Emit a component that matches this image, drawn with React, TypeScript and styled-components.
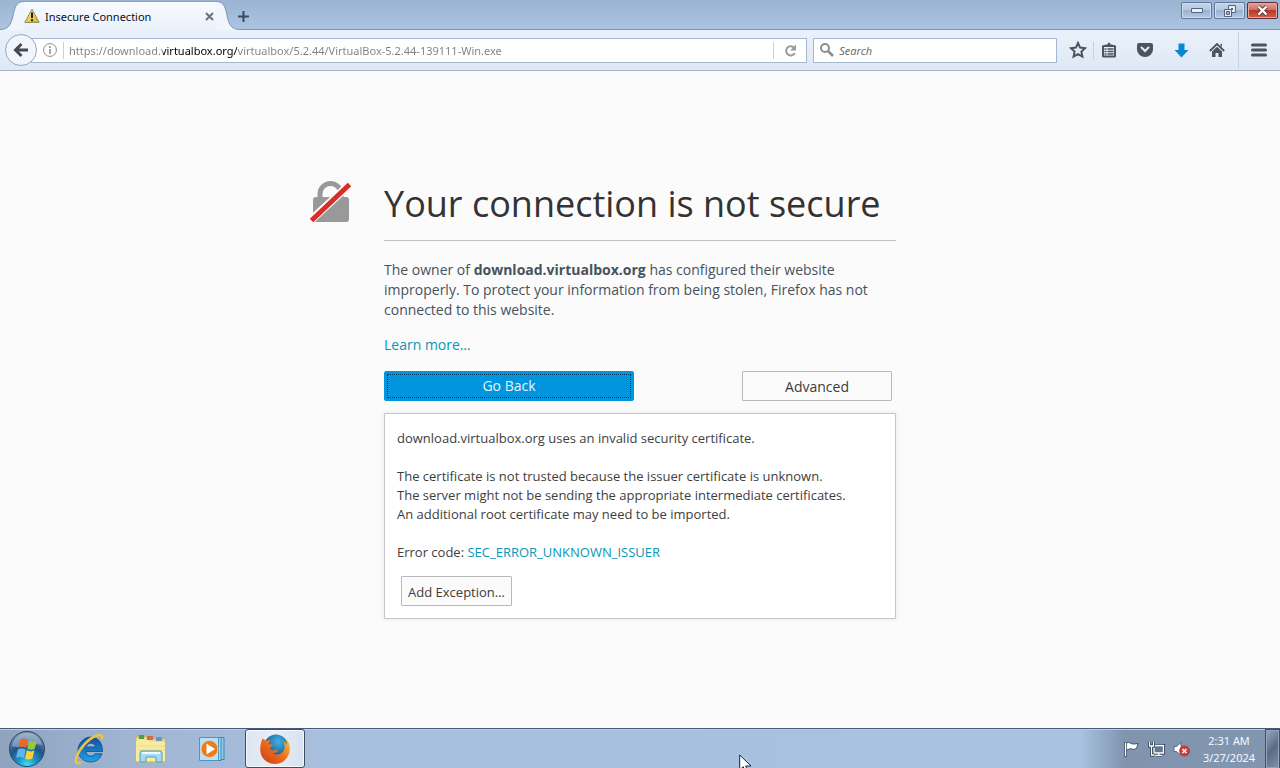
import React from "react";
import styled, { createGlobalStyle, css } from "styled-components";

const GlobalStyle = createGlobalStyle`
  *, *::before, *::after { box-sizing: border-box; }
  body {
    margin: 0;
    background: #fbfbfb;
    color: #47525c;
    font-family: "Open Sans", "Noto Sans", sans-serif;
    font-size: 14px;
  }
  button, input { font: inherit; }
  svg { display: block; flex: none; }
`;

const Desktop = styled.div`
  display: flex;
  flex-direction: column;
  min-height: 100vh;
  overflow: hidden;
`;

/* ---------- tab strip ---------- */

const TabStrip = styled.header`
  display: flex;
  align-items: flex-end;
  height: 30px;
  background: linear-gradient(#9bb4d1, #a5bedc 60%, #abc5e3);
  box-shadow: inset 0 -1px #8296b4;
  font-family: "Noto Sans", sans-serif;
`;

const TabFrame = styled.div`
  display: flex;
  width: 240px;
  height: 30px;
`;

const TabBody = styled.div`
  display: flex;
  align-items: center;
  flex: 1;
  min-width: 0;
  margin-top: 1px;
  border-top: 1px solid #8ba0bd;
  background: linear-gradient(#f8fbfe, #eaf1fa);
`;

const TabTitle = styled.span`
  flex: 1;
  margin-left: 5px;
  color: #0b0f1c;
  font-size: 11px;
  white-space: nowrap;
`;

const GlyphButton = styled.button<{ $width: number; $height: number }>`
  display: flex;
  align-items: center;
  justify-content: center;
  flex: none;
  width: ${(p) => p.$width}px;
  height: ${(p) => p.$height}px;
  padding: 0;
  border: 0;
  background: none;
`;

const Caption = styled.div`
  display: flex;
  align-self: flex-start;
  gap: 2px;
  margin: 2px 2px 0 auto;
`;

const CaptionButton = styled.button<{ $danger?: boolean }>`
  display: flex;
  align-items: center;
  justify-content: center;
  width: 31px;
  height: 17px;
  padding: 0;
  border: 1px solid ${(p) => (p.$danger ? "#5f2c3b" : "#62789a")};
  border-radius: 2px;
  background: ${(p) =>
    p.$danger
      ? "linear-gradient(#e0a497, #d1705f 45%, #b83a25 50%, #d0604b)"
      : "linear-gradient(#c4d5e9, #b5c9e1 45%, #9bb2d0 50%, #b3c8e2)"};
  box-shadow: inset 0 0 0 1px ${(p) => (p.$danger ? "#e3a99f" : "#cfdef0")};
`;

/* ---------- navigation bar ---------- */

const NavBar = styled.nav`
  display: flex;
  align-items: center;
  height: 41px;
  padding: 0 2px 0 5px;
  border-bottom: 1px solid #a4b6ce;
  background: linear-gradient(#eaf1fa, #dfe8f5);
  font-family: "Noto Sans", sans-serif;
`;

const BackButton = styled.button`
  z-index: 1;
  display: flex;
  align-items: center;
  justify-content: center;
  flex: none;
  width: 32px;
  height: 32px;
  padding: 0;
  border: 1px solid #93a7c4;
  border-radius: 50%;
  background: #f2f6fc;
`;

const Field = styled.div<{ $kind: "address" | "search" }>`
  display: flex;
  align-items: center;
  height: 25px;
  border: 1px solid #a5b6cf;
  background: #fff;
  ${(p) =>
    p.$kind === "address"
      ? css`
          flex: 764 1 0;
          margin-left: -6px;
          padding-left: 11px;
        `
      : css`
          flex: 236 1 0;
          margin-left: 6px;
          padding-left: 6px;
        `}
`;

const Separator = styled.span<{ $tall?: boolean }>`
  flex: none;
  width: 1px;
  height: ${(p) => (p.$tall ? 36 : 17)}px;
  background: #c6d1e0;
`;

const SiteInfo = styled(GlyphButton)`
  margin-right: 6px;
`;

const fieldText = css`
  flex: 1;
  min-width: 0;
  margin-left: 5px;
  padding: 0;
  border: 0;
  outline: 0;
  font-size: 11px;
`;

/* The registrable domain is drawn darker than the rest of the address. */
const AddressInput = styled.input`
  ${fieldText}
  background: linear-gradient(
    to right,
    #7f7f7f 94px,
    #000 94px,
    #000 168px,
    #7f7f7f 168px
  );
  background-clip: text;
  -webkit-background-clip: text;
  -webkit-text-fill-color: transparent;
`;

const SearchInput = styled.input`
  ${fieldText}
  background: none;
  &::placeholder {
    color: #6d6d6d;
    font-style: italic;
    opacity: 1;
  }
`;

const Tools = styled.div`
  display: flex;
  align-items: center;
  margin-left: 6px;
`;

/* ---------- error page ---------- */

const Page = styled.main`
  display: grid;
  grid-template-columns: 1fr minmax(0, 512px) 1fr;
  align-content: center;
  flex: 1;
`;

const LockCell = styled.div`
  justify-self: end;
  margin-right: 32px;
`;

const Title = styled.h1`
  margin: 0;
  padding-bottom: 12px;
  border-bottom: 1px solid #c1c1c1;
  color: #333;
  font-size: 36px;
  font-weight: 400;
  line-height: 48px;
  white-space: nowrap;
`;

const Intro = styled.p`
  margin: 19px 0 15px;
  line-height: 20px;
`;

const Link = styled.a`
  color: #0996b8;
  text-decoration: none;
`;

const LearnMore = styled.p`
  margin: 0 0 16px;
  line-height: 20px;
`;

const Actions = styled.div`
  display: flex;
  justify-content: space-between;
  margin-right: 4px;
`;

const PageButton = styled.button<{ $width: number; $primary?: boolean }>`
  width: ${(p) => p.$width}px;
  height: 30px;
  padding: ${(p) => (p.$primary ? 2 : 0)}px;
  border: 1px solid ${(p) => (p.$primary ? "#0095dd" : "#b9b9b9")};
  border-radius: ${(p) => (p.$primary ? 2 : 1)}px;
  background: ${(p) => (p.$primary ? "#0095dd" : "#fbfbfb")};
  color: ${(p) => (p.$primary ? "#e6f5fd" : "#3c3c3c")};
  white-space: nowrap;
`;

const FocusRing = styled.span`
  display: block;
  border: 1px dotted #06385c;
  line-height: 22px;
`;

const Details = styled.section`
  margin-top: 12px;
  padding: 15px 12px 12px;
  border: 1px solid #c6c6c6;
  background: #fff;
  box-shadow: 0 0 4px #e4e4e4;
  color: #3e3e3e;
  font-size: 13px;
  line-height: 19px;
`;

const Detail = styled.p`
  margin: 0 0 19px;
`;

const ErrorCode = styled.p`
  margin: 0 0 14px;
`;

const ExceptionButton = styled(PageButton)`
  display: block;
  margin-left: 4px;
  padding-top: 2px;
`;

/* ---------- taskbar ---------- */

const Taskbar = styled.footer`
  display: flex;
  height: 40px;
  border-top: 1px solid #45597b;
  background: linear-gradient(
    to right,
    #8fa3be,
    #a0b5d2 130px,
    #a8bfde 320px,
    #a8c2e0 calc(100% - 200px),
    #8094ae calc(100% - 155px),
    #8296b1
  );
  box-shadow: inset 0 1px #bfd0e5;
`;

const TaskButton = styled.button<{ $width: number; $active?: boolean }>`
  display: flex;
  align-items: center;
  justify-content: center;
  width: ${(p) => p.$width}px;
  padding: 0;
  border: ${(p) => (p.$active ? "1px solid #3f4d63" : "0")};
  border-radius: 3px;
  background: ${(p) =>
    p.$active ? "linear-gradient(to right, #dfe6f1, #e9edf5 50%, #d8e2ef)" : "none"};
  box-shadow: ${(p) => (p.$active ? "inset 0 0 0 1px #f6f9fd" : "none")};
`;

const Tray = styled.div`
  display: flex;
  align-items: center;
  margin-left: auto;
`;

const Clock = styled.time`
  width: 72px;
  color: #fff;
  font-size: 11px;
  line-height: 17px;
  text-align: center;
`;

const ShowDesktop = styled.button`
  width: 15px;
  height: 39px;
  padding: 0;
  border: 1px solid #41506a;
  border-bottom: 0;
  background: linear-gradient(135deg, #9aaabd, #5b6b82 50%, #8292a8);
  box-shadow: inset 0 0 0 1px #93a5bd;
`;

const Pointer = styled.svg`
  position: fixed;
  left: calc(50% + 99px);
  bottom: -6px;
  pointer-events: none;
`;

/* ---------- drawings ---------- */

const WarningIcon = () => (
  <svg width="16" height="16" viewBox="0 0 16 16">
    <defs>
      <linearGradient id="warn" x1="0" y1="0" x2="1" y2="1">
        <stop offset="0" stopColor="#fdf2a0" />
        <stop offset="1" stopColor="#dfae10" />
      </linearGradient>
    </defs>
    <path d="M8 1.200 15.200 14.400H.8z" fill="url(#warn)" stroke="#8f8a72" strokeLinejoin="round" />
    <path d="M8 4.500v5.500M8 11.300v2" stroke="#2a2408" strokeWidth="2" />
  </svg>
);

const StartOrb = () => (
  <svg width="38" height="38" viewBox="0 0 38 38">
    <defs>
      <radialGradient id="orb" cx=".5" cy=".95" r=".9">
        <stop offset="0" stopColor="#3fe0fa" />
        <stop offset=".3" stopColor="#1c93c4" />
        <stop offset=".6" stopColor="#1f5488" />
        <stop offset="1" stopColor="#7d95b0" />
      </radialGradient>
    </defs>
    <circle cx="19" cy="19" r="17.500" fill="url(#orb)" stroke="#2b4766" />
    <path d="M4 16C6 7 12 3 19 3s13 4 15 12C25 12 13 20 4 16z" fill="#d3e2ee" opacity=".4" />
    <path d="M12.500 9.500c3-1.500 5-1.300 7.500 0L18 18c-2.500-1.400-4.800-1.500-7.600-.3z" fill="#ef6427" />
    <path d="M21.200 10.500c3 1.400 5 1.300 7.500.2L26.700 19c-2.600 1.200-4.800 1-7.500-.4z" fill="#96c93d" />
    <path d="M10 19.300c2.800-1.200 5.200-1 7.700.4L15.800 28c-2.500-1.400-5-1.400-7.800-.2z" fill="#5fb6ee" />
    <path d="M18.900 20.300c2.600 1.300 4.800 1.500 7.500.3L24.300 28.800c-2.600 1.200-4.700 1-7.300-.4z" fill="#fbd03b" />
  </svg>
);

const ExplorerEIcon = () => (
  <svg width="34" height="34" viewBox="0 0 34 34">
    <defs>
      <linearGradient id="ie" x1="0" y1="0" x2="0" y2="1">
        <stop offset="0" stopColor="#14519c" />
        <stop offset=".5" stopColor="#1776c4" />
        <stop offset="1" stopColor="#1ba6e6" />
      </linearGradient>
    </defs>
    <path
      d="M30.500 19.500H14c.3 3 2 4.500 4.800 4.500 2 0 3.200-.8 4-2.200h7.200C28.300 27 24.200 30 18.800 30 12 30 6 25 6 18.200S12 5 18.800 5C26 5 30.700 11 30.500 19.500zM14.200 15h9.300c-.4-2.500-2-3.800-4.500-3.800s-4.300 1.300-4.800 3.800z"
      fill="url(#ie)"
      stroke="#134d86"
      strokeWidth=".8"
    />
    <path
      d="M30 6.500c.5-3-1.500-4.300-5-3C16.500 6.500 8 15.500 4.500 25c-1.600 5 .2 7.600 3.500 5.500"
      fill="none"
      stroke="#eac63f"
      strokeWidth="2.600"
      strokeLinecap="round"
    />
  </svg>
);

const FolderIcon = () => (
  <svg width="34" height="34" viewBox="0 0 34 34">
    <path d="M2 5h13l2 2h14v23H2z" fill="#f3e08b" stroke="#d3b955" />
    <path d="M5 3h5v4H5z" fill="#4c9f4a" />
    <path d="M13 4h6v4h-6z" fill="#d46b45" />
    <path d="M22 5h6v4h-6z" fill="#6c94c4" />
    <path d="M4 8h10l2 2h15v19H2V9z" fill="#f8eba3" />
    <path d="M3 14h28M3 18h28" stroke="#eed885" />
    <path d="M6 30v-9q0-2 2-2h18q2 0 2 2v9h-6v-5H12v5z" fill="#a6d9f2" stroke="#4b9ecb" />
    <path d="M8 21h18" stroke="#effaff" strokeWidth="2" />
  </svg>
);

const MediaIcon = () => (
  <svg width="28" height="28" viewBox="0 0 28 28">
    <path d="M10 2.500h16v22H10z" fill="#91c9ec" stroke="#3787b5" />
    <path d="M7 2.500h16v23H7z" fill="#a7d8f3" stroke="#3787b5" />
    <path d="M1.500 2.500h19v23h-19z" fill="#b8e1f5" stroke="#4b97c1" />
    <circle cx="11.500" cy="14" r="8.500" fill="#ee7a1e" stroke="#d9d0c4" />
    <path d="M8.500 8.500v11l8.500-5.500z" fill="#fff" />
  </svg>
);

const FirefoxIcon = () => (
  <svg width="32" height="32" viewBox="0 0 32 32">
    <defs>
      <radialGradient id="globe" cx=".6" cy=".3" r=".7">
        <stop offset="0" stopColor="#3fb3e8" />
        <stop offset="1" stopColor="#174a87" />
      </radialGradient>
      <linearGradient id="fox" x1="0" y1="1" x2="1" y2="0">
        <stop offset="0" stopColor="#c93a1b" />
        <stop offset=".5" stopColor="#ec6a1c" />
        <stop offset="1" stopColor="#fbc42e" />
      </linearGradient>
    </defs>
    <circle cx="17" cy="13.500" r="12" fill="url(#globe)" />
    <path
      d="M3.500 5.500C5 6 6 7 6.800 8c1.700-1 3.500-1 5-.3-1.600 1-2.300 2.300-2 3.500l4 .4c.6 1.400-1.800 2.300-2.800 3.200.5 1.600 1.500 2.700 3.200 2.600 1.800 0 3-.9 4.600-.1-.7 2-2.700 3-5 3 3.600 2.600 10 1.200 11.600-4.500.8-3-.1-6-1.400-8.100 2 1.200 3.300 2.500 4 4.300 0-2.400-.7-4.800-1.800-6.600C29.800 8 31.300 12 30.800 17 30 25 24 31 16 31 7.500 31 1.200 24.600 1.200 16.500c0-4 .9-7.800 2.300-11z"
      fill="url(#fox)"
    />
  </svg>
);

const LockIcon = () => (
  <svg width="44" height="44" viewBox="0 0 44 44">
    <path d="M12 20v-6a10.500 10.500 0 0 1 21 0v6" fill="none" stroke="#999" strokeWidth="5" />
    <rect x="5" y="17" width="36" height="25" rx="3" fill="#999" />
    <path d="M2 41 42 4" stroke="#fbfbfb" strokeWidth="8" />
    <path d="M3.500 40.500 41.500 4.500" stroke="#d92d27" strokeWidth="5" />
  </svg>
);

export default function App() {
  return (
    <Desktop>
      <GlobalStyle />
      <TabStrip>
        <TabFrame>
          <svg width="24" height="30" viewBox="0 0 24 30">
            <path d="M0 29.500C8 29.500 10.500 25 12.500 18 15 7 16 1.500 24 1.500V30H0z" fill="#f1f6fc" />
            <path d="M0 29.500C8 29.500 10.500 25 12.500 18 15 7 16 1.500 24 1.500" fill="none" stroke="#8296b4" />
          </svg>
          <TabBody>
            <WarningIcon />
            <TabTitle>Insecure Connection</TabTitle>
            <GlyphButton $width={14} $height={16} aria-label="Close tab">
              <svg width="9" height="9" viewBox="0 0 9 9">
                <path d="m1 1 7 7M8 1 1 8" stroke="#68717f" strokeWidth="2" />
              </svg>
            </GlyphButton>
          </TabBody>
          <svg width="24" height="30" viewBox="0 0 24 30">
            <path d="M0 1.500C8 1.500 9.500 7 11.500 18c2 7 4 11.500 12.500 11.500V30H0z" fill="#f1f6fc" />
            <path d="M0 1.500C8 1.500 9.500 7 11.500 18c2 7 4 11.500 12.500 11.500" fill="none" stroke="#8296b4" />
          </svg>
        </TabFrame>
        <GlyphButton $width={6} $height={28} aria-label="Open a new tab">
          <svg width="11" height="11" viewBox="0 0 11 11">
            <path d="M5.500 0v11M0 5.500h11" stroke="#3d4a5e" strokeWidth="2" />
          </svg>
        </GlyphButton>
        <Caption>
          <CaptionButton aria-label="Minimize">
            <svg width="12" height="5" viewBox="0 0 12 5">
              <path d="M.5.5h11v4H.5z" fill="#e8eff7" stroke="#54647e" />
            </svg>
          </CaptionButton>
          <CaptionButton aria-label="Restore">
            <svg width="12" height="12" viewBox="0 0 12 12">
              <path d="M4.500.5h7v7h-7z" fill="#e8eff7" stroke="#54647e" />
              <path d="M7 3h2v2H7z" fill="#54647e" />
              <path d="M.5 4.500h7v7h-7z" fill="#e8eff7" stroke="#54647e" />
              <path d="M2.500 6.500h3v3h-3z" fill="#9fb4d0" stroke="#54647e" />
            </svg>
          </CaptionButton>
          <CaptionButton $danger aria-label="Close">
            <svg width="13" height="11" viewBox="0 0 13 11">
              <path d="m2.500 1.500 8 8M10.500 1.500l-8 8" stroke="#5c3340" strokeWidth="4" />
              <path d="m2.500 1.500 8 8M10.500 1.500l-8 8" stroke="#fff" strokeWidth="2.400" />
            </svg>
          </CaptionButton>
        </Caption>
      </TabStrip>

      <NavBar>
        <BackButton aria-label="Back">
          <svg width="16" height="16" viewBox="0 0 16 16">
            <path d="M8.500 2 2.500 8l6 6M3 8h12" fill="none" stroke="#414b57" strokeWidth="3" />
          </svg>
        </BackButton>
        <Field $kind="address">
          <SiteInfo $width={14} $height={22} aria-label="Site information">
            <svg width="14" height="14" viewBox="0 0 14 14">
              <circle cx="7" cy="7" r="6.400" fill="none" stroke="#8c8c8c" />
              <path d="M7 3v2M7 6v5" stroke="#8c8c8c" strokeWidth="1.500" />
            </svg>
          </SiteInfo>
          <Separator />
          <AddressInput
            aria-label="Address"
            defaultValue="https://download.virtualbox.org/virtualbox/5.2.44/VirtualBox-5.2.44-139111-Win.exe"
          />
          <Separator />
          <GlyphButton $width={32} $height={22} aria-label="Reload">
            <svg width="13" height="13" viewBox="0 0 13 13">
              <path d="M10 3.500A4.600 4.600 0 1 0 10.800 9" fill="none" stroke="#9a9a9a" strokeWidth="2" />
              <path d="M12 .5v6H6z" fill="#9a9a9a" />
            </svg>
          </GlyphButton>
        </Field>
        <Field $kind="search">
          <svg width="14" height="14" viewBox="0 0 14 14">
            <circle cx="5" cy="5" r="4" fill="none" stroke="#8c8c8c" strokeWidth="2" />
            <path d="m8 8 5 5" stroke="#8c8c8c" strokeWidth="2.500" />
          </svg>
          <SearchInput aria-label="Search" placeholder="Search" />
        </Field>
        <Tools>
          <GlyphButton $width={30} $height={32} aria-label="Bookmark this page">
            <svg width="18" height="18" viewBox="0 0 18 18">
              <path
                d="m9 2 2.100 4.600 5 .6-3.700 3.400 1 5L9 13.100l-4.400 2.500 1-5L1.900 7.200l5-.6z"
                fill="none"
                stroke="#4b545f"
                strokeWidth="2"
              />
            </svg>
          </GlyphButton>
          <Separator />
          <GlyphButton $width={30} $height={32} aria-label="Bookmarks">
            <svg width="16" height="16" viewBox="0 0 16 16">
              <path
                d="M2.500 4h11q.5 0 .5.500v9.500q0 .5-.5.500h-11q-.5 0-.5-.5V4.500q0-.5.5-.5z"
                fill="#e6edf7"
                stroke="#4b545f"
                strokeWidth="2"
              />
              <path d="M4.500 4V2.500H6.500L7.200.8h1.600l.7 1.700h2V4z" fill="#4b545f" />
              <path d="M3.500 7h2M6.500 7h6M3.500 9.500h2M6.500 9.500h6M3.500 12h2M6.500 12h6" stroke="#4b545f" strokeWidth="1.500" />
            </svg>
          </GlyphButton>
          <GlyphButton $width={42} $height={32} aria-label="Save to Pocket">
            <svg width="16" height="16" viewBox="0 0 16 16">
              <path d="M2 1h12q2 0 2 2v4.500a8 7.500 0 0 1-16 0V3q0-2 2-2z" fill="#4b545f" />
              <path d="m4.500 5.500 3.500 3.500 3.500-3.500" fill="none" stroke="#e6edf7" strokeWidth="2" strokeLinecap="round" />
            </svg>
          </GlyphButton>
          <GlyphButton $width={30} $height={32} aria-label="Downloads">
            <svg width="15" height="15" viewBox="0 0 15 15">
              <path d="M4.500.5h6V7h4l-7 7.500L.5 7h4z" fill="#0b86d2" />
            </svg>
          </GlyphButton>
          <GlyphButton $width={42} $height={32} aria-label="Home">
            <svg width="16" height="16" viewBox="0 0 16 16">
              <path d="M.8 9 8 2l7.200 7" fill="none" stroke="#4b545f" strokeWidth="1.800" />
              <path d="M11.500 2H13v3l-1.500-1.400z" fill="#4b545f" />
              <path d="m8 4.800 5 4.800V15H9.500v-4h-3v4H3V9.600z" fill="#4b545f" />
            </svg>
          </GlyphButton>
          <Separator $tall />
          <GlyphButton $width={39} $height={32} aria-label="Open menu">
            <svg width="16" height="14" viewBox="0 0 16 14">
              <path d="M1.500 2h13M1.500 7h13M1.500 12h13" stroke="#4b545f" strokeWidth="3" strokeLinecap="round" />
            </svg>
          </GlyphButton>
        </Tools>
      </NavBar>

      <Page>
        <LockCell>
          <LockIcon />
        </LockCell>
        <div>
          <Title>Your connection is not secure</Title>
          <Intro>
            The owner of <b>download.virtualbox.org</b> has configured their website improperly. To
            protect your information from being stolen, Firefox has not connected to this website.
          </Intro>
          <LearnMore>
            <Link href="#learn-more">Learn more…</Link>
          </LearnMore>
          <Actions>
            <PageButton $width={250} $primary>
              <FocusRing>Go Back</FocusRing>
            </PageButton>
            <PageButton $width={150}>Advanced</PageButton>
          </Actions>
          <Details>
            <Detail>download.virtualbox.org uses an invalid security certificate.</Detail>
            <Detail>
              The certificate is not trusted because the issuer certificate is unknown.
              <br />
              The server might not be sending the appropriate intermediate certificates.
              <br />
              An additional root certificate may need to be imported.
            </Detail>
            <ErrorCode>
              Error code: <Link href="#error-code">SEC_ERROR_UNKNOWN_ISSUER</Link>
            </ErrorCode>
            <ExceptionButton $width={111}>Add Exception…</ExceptionButton>
          </Details>
        </div>
      </Page>

      <Taskbar>
        <TaskButton $width={54} aria-label="Start">
          <StartOrb />
        </TaskButton>
        <TaskButton $width={70} aria-label="Internet Explorer">
          <ExplorerEIcon />
        </TaskButton>
        <TaskButton $width={54} aria-label="Windows Explorer">
          <FolderIcon />
        </TaskButton>
        <TaskButton $width={67} aria-label="Windows Media Player">
          <MediaIcon />
        </TaskButton>
        <TaskButton $width={60} $active aria-label="Firefox">
          <FirefoxIcon />
        </TaskButton>
        <Tray>
          <GlyphButton $width={24} $height={39} aria-label="Action Center">
            <svg width="16" height="16" viewBox="0 0 16 16">
              <path d="M2.500 1v14.500" stroke="#26374d" strokeWidth="3" />
              <path d="M3.500 2c3-1.500 4 1 6.500 1 1.500 0 3 0 5-.5-.5 2-1 4-2.500 5.500-3 1-4-1-6 0-1 .3-2 .6-3 1z" fill="#fff" stroke="#26374d" strokeWidth=".8" />
              <path d="M2.500 1.500v13.500" stroke="#fff" strokeWidth="1.500" />
            </svg>
          </GlyphButton>
          <GlyphButton $width={26} $height={39} aria-label="Network">
            <svg width="17" height="16" viewBox="0 0 17 16">
              <path d="M6 4.500h9.500v7.500H6zM8 14.500h6M10.800 12v2.500" fill="#7c91ad" stroke="#26374d" strokeWidth="3" />
              <path d="M6 4.500h9.500v7.500H6zM7.500 14.500h6.500M10.800 12v2.500" fill="#63788f" stroke="#fff" strokeWidth="1.300" />
              <path d="M1.500 1v4h4V1M3.500 5v9h3" fill="none" stroke="#26374d" strokeWidth="3" />
              <path d="M1.500 1v4h4V1M3.500 5v9h3" fill="none" stroke="#fff" strokeWidth="1.300" />
            </svg>
          </GlyphButton>
          <GlyphButton $width={24} $height={39} aria-label="Volume muted">
            <svg width="17" height="16" viewBox="0 0 17 16">
              <path d="M1 5.500h2.500L8 1.500v13l-4.500-4H1z" fill="#fff" stroke="#46566c" strokeWidth=".8" />
              <circle cx="11.500" cy="10" r="5" fill="#d43b35" stroke="#a42626" strokeWidth=".6" />
              <path d="m9.500 8 4 4M13.500 8l-4 4" stroke="#fff" strokeWidth="1.600" />
            </svg>
          </GlyphButton>
          <Clock>
            2:31 AM
            <br />
            3/27/2024
          </Clock>
          <ShowDesktop aria-label="Show desktop" />
        </Tray>
      </Taskbar>

      <Pointer width="13" height="20" viewBox="0 0 13 20">
        <path d="M.7 1v15l3.500-3.300L6.500 18.500 9 17.400 6.600 12H12z" fill="#fff" stroke="#1b2330" />
      </Pointer>
    </Desktop>
  );
}
